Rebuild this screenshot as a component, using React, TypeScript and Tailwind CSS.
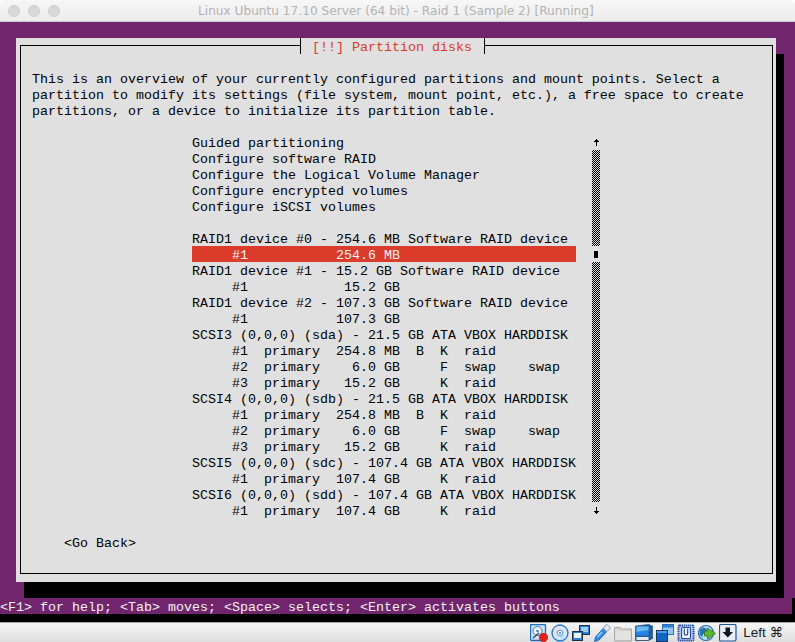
const intro = [
  "This is an overview of your currently configured partitions and mount points. Select a",
  "partition to modify its settings (file system, mount point, etc.), a free space to create",
  "partitions, or a device to initialize its partition table.",
];

const rows = [
  "Guided partitioning",
  "Configure software RAID",
  "Configure the Logical Volume Manager",
  "Configure encrypted volumes",
  "Configure iSCSI volumes",
  "",
  "RAID1 device #0 - 254.6 MB Software RAID device",
  "     #1           254.6 MB",
  "RAID1 device #1 - 15.2 GB Software RAID device",
  "     #1            15.2 GB",
  "RAID1 device #2 - 107.3 GB Software RAID device",
  "     #1           107.3 GB",
  "SCSI3 (0,0,0) (sda) - 21.5 GB ATA VBOX HARDDISK",
  "     #1  primary  254.8 MB  B  K  raid",
  "     #2  primary    6.0 GB     F  swap    swap",
  "     #3  primary   15.2 GB     K  raid",
  "SCSI4 (0,0,0) (sdb) - 21.5 GB ATA VBOX HARDDISK",
  "     #1  primary  254.8 MB  B  K  raid",
  "     #2  primary    6.0 GB     F  swap    swap",
  "     #3  primary   15.2 GB     K  raid",
  "SCSI5 (0,0,0) (sdc) - 107.4 GB ATA VBOX HARDDISK",
  "     #1  primary  107.4 GB     K  raid",
  "SCSI6 (0,0,0) (sdd) - 107.4 GB ATA VBOX HARDDISK",
  "     #1  primary  107.4 GB     K  raid",
];

const SELECTED = 7;
const checker = "w-2 bg-[repeating-conic-gradient(#000_0_25%,#e0e0e0_0_50%)] bg-[length:2px_2px]";

function Scrollbar() {
  return (
    <div className="flex w-2 flex-col">
      <div className="flex h-4 items-center justify-center">
        <svg width="5" height="7" viewBox="0 0 5 7" shapeRendering="crispEdges">
          <path d="M2 0h1v7H2zM1 1h3v1H1zM0 2h5v1H0z" fill="#000" />
        </svg>
      </div>
      <div className={`h-24 ${checker}`} />
      <div className="flex h-4 items-center justify-center">
        <div className="h-[7px] w-1 bg-black" />
      </div>
      <div className={`h-60 ${checker}`} />
      <div className="flex h-4 items-center justify-center">
        <svg width="5" height="7" viewBox="0 0 5 7" shapeRendering="crispEdges">
          <path d="M2 0h1v7H2zM1 5h3v1H1zM0 4h5v1H0z" fill="#000" />
        </svg>
      </div>
    </div>
  );
}

function HddIcon() {
  return (
    <svg width="18" height="18" viewBox="0 0 18 18">
      <rect x="0.500" y="0.500" width="15" height="16" rx="1" fill="#cfe3f5" stroke="#1f6cc0" strokeWidth="1.300" />
      <circle cx="7.500" cy="7" r="4.500" fill="#eef5fb" stroke="#3d78b0" />
      <circle cx="7.500" cy="7" r="1.200" fill="#3d78b0" />
      <path d="M3 14l6-5" stroke="#33445c" strokeWidth="1.400" />
      <circle cx="13.500" cy="13.500" r="4.200" fill="#e3211c" stroke="#a81512" strokeWidth="0.600" />
    </svg>
  );
}

function DiscIcon() {
  return (
    <svg width="18" height="18" viewBox="0 0 18 18">
      <circle cx="9" cy="9" r="8" fill="#d6e6f8" stroke="#2474c8" strokeWidth="1.300" />
      <path d="M9 9L3 5a7 7 0 0 1 6-3z" fill="#f3d9f0" />
      <path d="M9 9l6 4a7 7 0 0 1-6 3z" fill="#bfe3f6" />
      <circle cx="9" cy="9" r="2.800" fill="#fff" stroke="#5a93cc" />
      <circle cx="9" cy="9" r="1" fill="#2474c8" />
    </svg>
  );
}

function NetworkIcon() {
  return (
    <svg width="18" height="18" viewBox="0 0 18 18">
      <rect x="7.500" y="1.500" width="10" height="9" fill="#2f7fd0" stroke="#1d2f4a" />
      <rect x="9" y="3" width="7" height="5" fill="#9fcdf5" />
      <rect x="0.500" y="7.500" width="10" height="9" fill="#2f7fd0" stroke="#1d2f4a" />
      <rect x="2" y="9" width="7" height="5" fill="#eaf4fd" />
    </svg>
  );
}

function UsbIcon() {
  return (
    <svg width="18" height="18" viewBox="0 0 18 18">
      <path d="M10 4.500l3.500 3.500-7.500 8-4.500 1.500 1-4.500z" fill="#2f8ae6" stroke="#1a5eab" strokeWidth="0.800" />
      <path d="M10.500 4l2-3q1-1 2.200 0l2 2q1 1.200 0 2.200l-3 2.300z" fill="#dfe9f3" stroke="#6c8cab" strokeWidth="0.800" />
      <path d="M4.500 13l4.500-5" stroke="#a8d2f7" strokeWidth="1.200" />
    </svg>
  );
}

function FolderIcon() {
  return (
    <svg width="18" height="18" viewBox="0 0 18 18">
      <path d="M0.500 3.500h6l1 1.500h10v12h-17z" fill="#d4d4d2" stroke="#a9a9a6" />
      <path d="M1.500 7h15v9h-15z" fill="#e2e2e0" />
    </svg>
  );
}

function DisplayIcon() {
  return (
    <svg width="18" height="18" viewBox="0 0 18 18">
      <path d="M0.500 2l13-1.500 4 1.500v12.500l-4 2h-13z" fill="#1f5f9e" stroke="#17385c" strokeWidth="0.600" />
      <rect x="1.500" y="2.500" width="12" height="9" fill="#1f86e6" />
      <path d="M1.500 2.500h12v3.500l-12 2z" fill="#6cb8f5" />
      <rect x="1.500" y="13" width="12" height="3" fill="#e3e7ec" />
    </svg>
  );
}

function ScreensIcon() {
  return (
    <svg width="18" height="18" viewBox="0 0 18 18">
      <rect x="6.500" y="0.500" width="11" height="10" fill="#8fc4f3" stroke="#2a6fb5" />
      <rect x="7" y="1" width="10" height="2.500" fill="#2f7fd0" />
      <rect x="0.500" y="6.500" width="11" height="11" fill="#0f66c4" stroke="#17385c" />
      <rect x="1" y="7" width="10" height="2" fill="#4aa0ec" />
    </svg>
  );
}

function ChipIcon() {
  return (
    <svg width="18" height="18" viewBox="0 0 18 18">
      <rect x="1.500" y="1.500" width="15" height="15" rx="1" fill="#c9d8f2" stroke="#1f4aa6" strokeWidth="2" strokeDasharray="1.400 0.700" />
      <rect x="4.500" y="3.500" width="9" height="11" rx="1" fill="#f4f7fd" stroke="#1f4aa6" strokeWidth="1.200" />
      <path d="M7.300 4.500v5a1.700 1.700 0 0 0 3.400 0v-5" fill="none" stroke="#1f4aa6" strokeWidth="1.200" />
    </svg>
  );
}

function GlobeIcon() {
  return (
    <svg width="18" height="18" viewBox="0 0 18 18">
      <circle cx="8" cy="9" r="7.500" fill="#b9dcf5" stroke="#1f6aa8" strokeWidth="1.200" />
      <path d="M2 6q3-4 6-1.500t-1 4.500-2 4.500-3.500-3z" fill="#2474bc" />
      <path d="M9.500 4l8 5.500-8 5.500v-3h-3v-5h3z" fill="#5cb531" stroke="#2f7a16" strokeWidth="0.800" />
    </svg>
  );
}

function CaptureIcon() {
  return (
    <svg width="18" height="18" viewBox="0 0 18 18">
      <rect x="0.500" y="0.500" width="16.500" height="16.500" rx="1.500" fill="#e8eef6" stroke="#1f5596" strokeWidth="1.200" />
      <path d="M6.500 3.500h4.500v4.500h3L8.800 13.500 3.500 8h3z" fill="#15181e" />
    </svg>
  );
}

export default function App() {
  return (
    <div className="flex h-[642px] w-[795px] flex-col overflow-hidden bg-white font-['Liberation_Mono',monospace] text-[13.34px] leading-5">
      <div className="flex h-[22px] shrink-0 items-center rounded-t-[5px] border-b border-[#c9c9c9] bg-gradient-to-b from-[#f7f7f7] to-[#ececec]">
        <div className="flex gap-2 pl-2">
          <span className="size-3 rounded-full border border-[#cdcdcd] bg-[#d8d8d8]" />
          <span className="size-3 rounded-full border border-[#cdcdcd] bg-[#d8d8d8]" />
          <span className="size-3 rounded-full border border-[#cdcdcd] bg-[#d8d8d8]" />
        </div>
        <div className="ml-[138px] whitespace-pre font-['DejaVu_Sans',sans-serif] text-[12.15px] leading-4 text-[#b2b2b2]">
          Linux Ubuntu 17.10 Server (64 bit) - Raid 1 (Sample 2) [Running]
        </div>
      </div>

      <div className="h-[576px] shrink-0 bg-[#70256d] pl-4 pt-4">
        <div className="relative h-[544px] w-[760px] bg-[#e0e0e0] pl-1 pt-[7px] text-black shadow-[8px_16px_0_#000]">
          <div className="absolute left-[284px] top-0 h-4 w-[185px] whitespace-pre border-x border-black bg-[#e0e0e0] pl-[11px] text-[#da3b2a]">
            [!!] Partition disks
          </div>
          <div className="h-[529px] w-[753px] whitespace-pre border border-black pl-[11px] pt-6">
            {intro.map((line) => (
              <div key={line} className="h-4">{line}</div>
            ))}
            <div className="ml-40 mt-4 flex gap-4">
              <div className="w-96">
                {rows.map((row, i) => (
                  <div key={i} className={i === SELECTED ? "h-4 bg-[#da3b2a] text-[#f4f4f4]" : "h-4"}>{row}</div>
                ))}
              </div>
              <Scrollbar />
            </div>
            <div className="ml-8 mt-4 h-4">&lt;Go Back&gt;</div>
          </div>
        </div>
      </div>

      <div className="h-4 shrink-0 whitespace-pre border-r-[3px] border-black bg-[#70256d] text-[#f2f2f2]">
        {"<F1> for help; <Tab> moves; <Space> selects; <Enter> activates buttons"}
      </div>
      <div className="h-2 shrink-0 bg-black" />

      <div className="flex h-5 shrink-0 items-center justify-end border-t border-[#a8a8a8] bg-gradient-to-b from-[#f6f6f6] to-[#dedede] pr-[12px]">
        <div className="flex items-center gap-[3px]">
          <HddIcon />
          <DiscIcon />
          <NetworkIcon />
          <UsbIcon />
          <FolderIcon />
          <DisplayIcon />
          <ScreensIcon />
          <ChipIcon />
          <GlobeIcon />
          <CaptureIcon />
        </div>
        <div className="ml-[6px] font-['Liberation_Sans','DejaVu_Sans',sans-serif] text-[13.5px] leading-4 text-[#1a1a1a]">Left ⌘</div>
      </div>
    </div>
  );
}
